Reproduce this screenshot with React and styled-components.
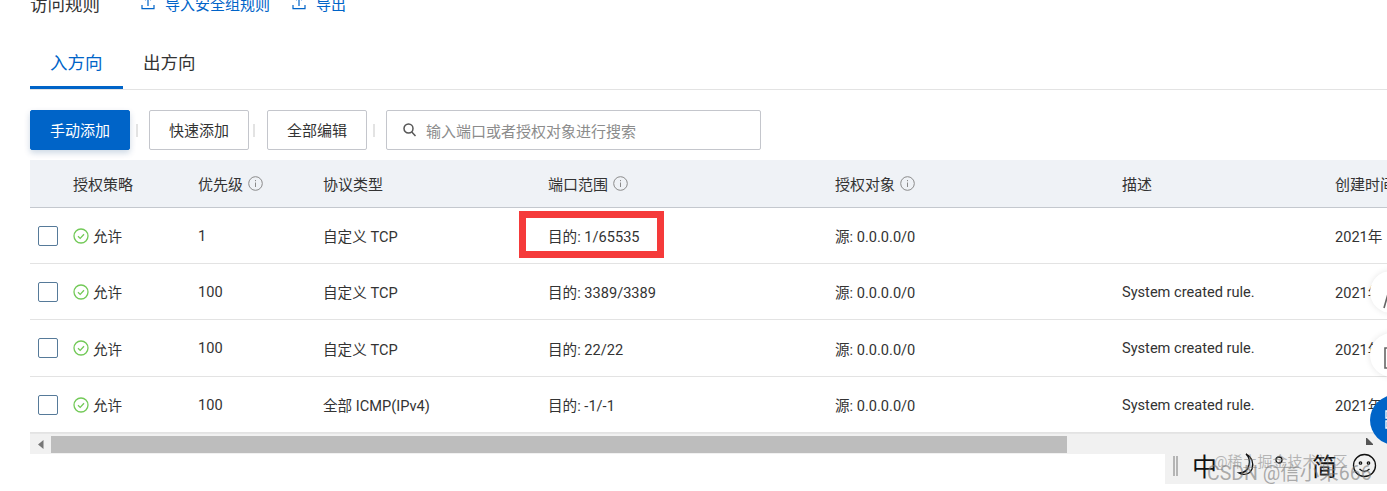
import React from 'react';
import styled, { createGlobalStyle } from 'styled-components';

const GlobalStyle = createGlobalStyle`
  html, body {
    margin: 0;
    padding: 0;
    background: #fff;
  }
  body {
    font-family: Roboto, "Noto Sans CJK SC", sans-serif;
    color: #333;
  }
`;

const Page = styled.div`
  position: relative;
  width: 1387px;
  height: 491px;
  overflow: hidden;
  padding-left: 30px;
  box-sizing: border-box;
`;

const TitleRow = styled.div`
  display: flex;
  align-items: center;
  height: 24px;
  margin-top: -9px;
`;

const Title = styled.h3`
  margin: 0 41px 0 0;
  font-size: 17.5px;
  font-weight: 400;
  color: #333;
`;

const LinkAction = styled.a`
  display: flex;
  align-items: center;
  gap: 10px;
  margin-right: 22px;
  font-size: 15px;
  color: #0064c8;
`;

const Tabs = styled.div`
  display: flex;
  height: 49px;
  margin-top: 25px;
  border-bottom: 1px solid #e3e3e3;
`;

const Tab = styled.div`
  padding: 0 20.5px 0 20px;
  line-height: 47px;
  height: 46px;
  font-size: 17.5px;
  color: ${props => (props.$active ? '#0064c8' : '#333')};
  border-bottom: ${props => (props.$active ? '3px solid #0064c8' : '3px solid transparent')};
`;

const Toolbar = styled.div`
  display: flex;
  align-items: center;
  height: 40px;
  margin-top: 20px;
`;

const Button = styled.button`
  width: 100px;
  height: 40px;
  padding: 0 0 2px;
  box-sizing: border-box;
  border-radius: 2px;
  font-family: inherit;
  font-size: 15px;
  color: ${props => (props.$primary ? '#fff' : '#333')};
  background: ${props => (props.$primary ? '#0064c8' : '#fff')};
  border: 1px solid ${props => (props.$primary ? '#0064c8' : '#c4c6cc')};
  box-shadow: ${props => (props.$primary ? '0 3px 6px rgba(0, 60, 120, 0.2)' : 'none')};
`;

const Separator = styled.span`
  width: 2px;
  height: 13px;
  margin: 0 ${props => props.$right || 11}px 0 ${props => props.$left || 6}px;
  background: #e3e3e3;
`;

const Search = styled.div`
  display: flex;
  align-items: center;
  gap: 10px;
  width: 375px;
  height: 40px;
  box-sizing: border-box;
  padding-left: 16px;
  border: 1px solid #c4c6cc;
  border-radius: 2px;
  font-size: 15px;
  color: #8c8c8c;
`;

const Table = styled.div`
  margin-top: 10px;
  width: 1400px;
`;

const Row = styled.div`
  display: grid;
  grid-template-columns: 43px 125px 125px 225px 287px 287px 213px 95px;
  align-items: center;
  height: ${props => props.$height || 56}px;
  box-sizing: border-box;
  border-bottom: 1px solid #e3e3e3;
  font-size: 14.6px;
  color: #333;
`;

const HeadRow = styled(Row)`
  height: 48px;
  font-size: 15px;
  background: #eff2f6;
  border-bottom: 1px solid #c4c8ce;
  color: #333;
`;

const Cell = styled.div`
  position: relative;
  display: flex;
  align-items: center;
  white-space: nowrap;
  min-width: 0;
`;

const CheckCell = styled(Cell)`
  padding-left: 8px;
`;

const Checkbox = styled.span`
  width: 20px;
  height: 20px;
  box-sizing: border-box;
  border: 1px solid #567a99;
  border-radius: 2px;
`;

const Allow = styled(Cell)`
  gap: 4px;
`;

const InfoIcon = styled.svg`
  margin-left: 5px;
  flex: none;
`;

const Highlight = styled.span`
  position: absolute;
  left: -29px;
  top: -25px;
  width: 145px;
  height: 47px;
  box-sizing: border-box;
  border: 7px solid #f53a3a;
`;

const HighlightAnchor = styled.span`
  position: relative;
  display: block;
  height: 0;
  width: 0;
`;

const ScrollBar = styled.div`
  display: flex;
  align-items: center;
  width: 1357px;
  height: 21px;
  background: #f1f1f1;
  border-top: 1px solid #e6e6e6;
  box-sizing: border-box;
`;

const ArrowBtn = styled.span`
  display: flex;
  justify-content: center;
  width: 21px;
  flex: none;
`;

const Thumb = styled.div`
  width: 1016px;
  height: 17px;
  background: #bdbdbd;
`;

const Corner = styled.svg`
  position: absolute;
  left: 1366px;
  top: 438px;
`;

const FloatCircle = styled.div`
  position: absolute;
  left: 1370px;
  top: ${props => props.$top}px;
  width: ${props => props.$size}px;
  height: ${props => props.$size}px;
  box-sizing: border-box;
  padding: ${props => props.$pad}px 0 0 ${props => props.$padLeft}px;
  border-radius: 50%;
  background: ${props => props.$color};
  box-shadow: ${props => (props.$shadow ? '0 0 6px rgba(0, 0, 0, 0.1)' : 'none')};
`;

const ImeBar = styled.div`
  position: absolute;
  left: 1165px;
  top: 453px;
  width: 222px;
  height: 31px;
  padding-bottom: 6px;
  box-sizing: border-box;
  display: flex;
  align-items: center;
  background: #f1f1f1;
  color: #111;
`;

const ImeGrip = styled.span`
  width: 5px;
  height: 20px;
  margin: 0 14px 0 8px;
  border-left: 2px solid #b5b5b5;
  border-right: 2px solid #b5b5b5;
  box-sizing: border-box;
  flex: none;
`;

const ImeChar = styled.span`
  margin-left: ${props => props.$gap || 0}px;
  font-size: 25px;
  line-height: 25px;
  font-family: "Noto Sans CJK SC", sans-serif;
  flex: none;
`;

const ImeIcon = styled.svg`
  flex: none;
  margin-left: ${props => props.$gap || 0}px;
`;

const Watermark = styled.div`
  position: absolute;
  left: ${props => props.$left}px;
  top: ${props => props.$top}px;
  font-size: ${props => props.$size}px;
  line-height: 1;
  white-space: nowrap;
  color: rgba(120, 120, 120, ${props => props.$alpha});
`;

const columns = [
  { label: '授权策略' },
  { label: '优先级', info: true },
  { label: '协议类型' },
  { label: '端口范围', info: true },
  { label: '授权对象', info: true },
  { label: '描述' },
  { label: '创建时间' },
];

const rows = [
  { priority: '1', protocol: '自定义 TCP', port: '目的: 1/65535', desc: '', marked: true, height: 56 },
  { priority: '100', protocol: '自定义 TCP', port: '目的: 3389/3389', desc: 'System created rule.', height: 56 },
  { priority: '100', protocol: '自定义 TCP', port: '目的: 22/22', desc: 'System created rule.', height: 57 },
  { priority: '100', protocol: '全部 ICMP(IPv4)', port: '目的: -1/-1', desc: 'System created rule.', height: 56 },
];

function ExportIcon() {
  return (
    <svg width="14" height="14" viewBox="0 0 14 14" fill="none" stroke="#0064c8" strokeWidth="1.2">
      <path d="M7 10V1.500M4 4.200 7 1.200l3 3M1 9v3.600h12V9" />
    </svg>
  );
}

function Info() {
  return (
    <InfoIcon width="15" height="15" viewBox="0 0 15 15" fill="none" stroke="#8a8a8a">
      <circle cx="7.500" cy="7.500" r="6.800" />
      <path d="M7.500 6.500v4.500M7.500 4v1.200" />
    </InfoIcon>
  );
}

function AllowIcon() {
  return (
    <svg width="16" height="16" viewBox="0 0 16 16" fill="none" stroke="#72c957" strokeWidth="1.3">
      <circle cx="8" cy="8" r="7" />
      <path d="M5 8.200 7.200 10.400 11 6.200" />
    </svg>
  );
}

export default function App() {
  return (
    <Page>
      <GlobalStyle />
      <TitleRow>
        <Title>访问规则</Title>
        <LinkAction>
          <ExportIcon />
          导入安全组规则
        </LinkAction>
        <LinkAction>
          <ExportIcon />
          导出
        </LinkAction>
      </TitleRow>

      <Tabs>
        <Tab $active>入方向</Tab>
        <Tab>出方向</Tab>
      </Tabs>

      <Toolbar>
        <Button $primary>手动添加</Button>
        <Separator />
        <Button>快速添加</Button>
        <Separator $left={4} $right={12} />
        <Button>全部编辑</Button>
        <Separator $left={6} $right={11} />
        <Search>
          <svg width="13" height="14" viewBox="0 0 13 14" fill="none" stroke="#555" strokeWidth="1.5">
            <circle cx="5.500" cy="5.500" r="4.500" />
            <path d="M8.800 9 12.500 13" />
          </svg>
          输入端口或者授权对象进行搜索
        </Search>
      </Toolbar>

      <Table>
        <HeadRow>
          <Cell />
          {columns.map(col => (
            <Cell key={col.label}>
              {col.label}
              {col.info && <Info />}
            </Cell>
          ))}
        </HeadRow>
        {rows.map((row, i) => (
          <Row key={i} $height={row.height}>
            <CheckCell>
              <Checkbox />
            </CheckCell>
            <Allow>
              <AllowIcon />
              允许
            </Allow>
            <Cell>{row.priority}</Cell>
            <Cell>{row.protocol}</Cell>
            <Cell>
              {row.marked && (
                <HighlightAnchor>
                  <Highlight />
                </HighlightAnchor>
              )}
              {row.port}
            </Cell>
            <Cell>源: 0.0.0.0/0</Cell>
            <Cell>{row.desc}</Cell>
            <Cell>2021年</Cell>
          </Row>
        ))}
      </Table>

      <ScrollBar>
        <ArrowBtn>
          <svg width="6" height="9" viewBox="0 0 6 9">
            <path d="M5.500 0v9L0 4.500z" fill="#777" />
          </svg>
        </ArrowBtn>
        <Thumb />
      </ScrollBar>
      <Corner width="8" height="8" viewBox="0 0 8 8">
        <path d="M0 0h1l6 6v1H0z" fill="#555" />
      </Corner>

      <FloatCircle $top={271} $size={42} $color="#fff" $shadow $pad={22} $padLeft={13}>
        <svg width="10" height="16" viewBox="0 0 10 16" fill="none" stroke="#666" strokeWidth="1.6">
          <path d="M1 15 5 1h5" />
        </svg>
      </FloatCircle>
      <FloatCircle $top={333} $size={44} $color="#fff" $shadow $pad={14} $padLeft={14}>
        <svg width="10" height="22" viewBox="0 0 10 22" fill="none" stroke="#666" strokeWidth="1.6">
          <path d="M10 1H1v20h9" />
        </svg>
      </FloatCircle>
      <FloatCircle $top={395} $size={50} $color="#0064c8" $pad={15} $padLeft={15}>
        <svg width="10" height="20" viewBox="0 0 10 20" fill="none" stroke="#fff" strokeWidth="1.4">
          <path d="M1 1h9v7H1zM1 11h9v7H1z" />
        </svg>
      </FloatCircle>

      <ImeBar>
        <ImeGrip />
        <ImeChar>中</ImeChar>
        <ImeIcon $gap={18} width="26" height="26" viewBox="0 0 26 26" fill="none" stroke="#111" strokeWidth="1.3">
          <path d="M11 1c6 3 8 9 6 15-2 5-8 7-13 4 6 0 9-3 10-8 1-4 0-8-3-11z" />
        </ImeIcon>
        <ImeIcon $gap={14} width="8" height="24" viewBox="0 0 8 24" fill="none" stroke="#111" strokeWidth="1.3">
          <circle cx="4" cy="6" r="3" />
        </ImeIcon>
        <ImeChar $gap={29}>简</ImeChar>
        <ImeIcon $gap={15} width="25" height="25" viewBox="0 0 25 25" fill="none" stroke="#111" strokeWidth="1.3">
          <circle cx="12.500" cy="12.500" r="11" />
          <circle cx="8.500" cy="10" r="1.200" />
          <circle cx="16.500" cy="10" r="1.200" />
          <path d="M7.500 16c3 3 7 3 10 0" />
        </ImeIcon>
      </ImeBar>

      <Watermark $left={1214} $top={455} $size={15} $alpha={0.5}>@稀土掘金技术社区</Watermark>
      <Watermark $left={1207} $top={464} $size={19.500} $alpha={0.6}>CSDN @信小呆666</Watermark>
    </Page>
  );
}
